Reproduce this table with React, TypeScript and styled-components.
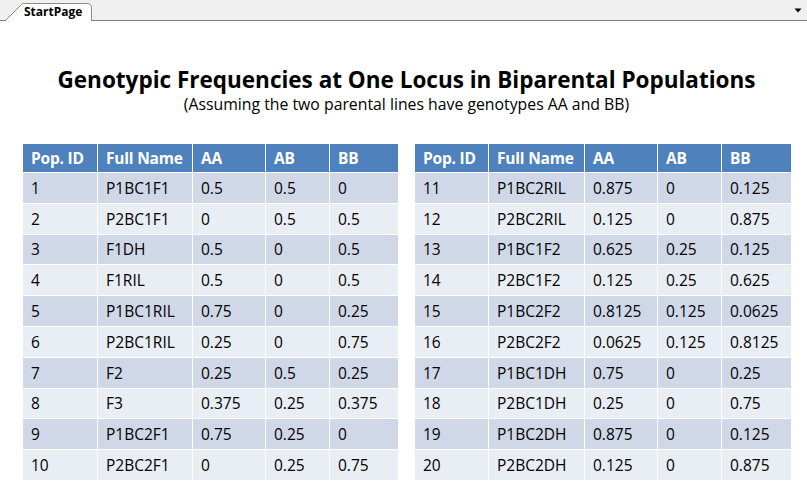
import styled, { createGlobalStyle } from 'styled-components';

type PopRow = [number, string, string, string, string];

const leftRows: PopRow[] = [
  [1, 'P1BC1F1', '0.5', '0.5', '0'],
  [2, 'P2BC1F1', '0', '0.5', '0.5'],
  [3, 'F1DH', '0.5', '0', '0.5'],
  [4, 'F1RIL', '0.5', '0', '0.5'],
  [5, 'P1BC1RIL', '0.75', '0', '0.25'],
  [6, 'P2BC1RIL', '0.25', '0', '0.75'],
  [7, 'F2', '0.25', '0.5', '0.25'],
  [8, 'F3', '0.375', '0.25', '0.375'],
  [9, 'P1BC2F1', '0.75', '0.25', '0'],
  [10, 'P2BC2F1', '0', '0.25', '0.75'],
];

const rightRows: PopRow[] = [
  [11, 'P1BC2RIL', '0.875', '0', '0.125'],
  [12, 'P2BC2RIL', '0.125', '0', '0.875'],
  [13, 'P1BC1F2', '0.625', '0.25', '0.125'],
  [14, 'P2BC1F2', '0.125', '0.25', '0.625'],
  [15, 'P1BC2F2', '0.8125', '0.125', '0.0625'],
  [16, 'P2BC2F2', '0.0625', '0.125', '0.8125'],
  [17, 'P1BC1DH', '0.75', '0', '0.25'],
  [18, 'P2BC1DH', '0.25', '0', '0.75'],
  [19, 'P1BC2DH', '0.875', '0', '0.125'],
  [20, 'P2BC2DH', '0.125', '0', '0.875'],
];

const headers = ['Pop. ID', 'Full Name', 'AA', 'AB', 'BB'];

const GlobalStyle = createGlobalStyle`
  html, body {
    margin: 0;
    padding: 0;
    background: #ffffff;
  }
  body {
    font-family: "Open Sans", "Noto Sans", sans-serif;
    color: #000000;
  }
`;

const Page = styled.div`
  width: 807px;
  height: 500px;
  overflow: hidden;
`;

const TabBar = styled.div`
  display: flex;
  align-items: flex-end;
  justify-content: space-between;
  height: 20px;
  padding: 0 5px 0 5px;
  background: #f0f0f0;
  border-bottom: 1px solid #7c7c7c;
`;

const Tab = styled.div`
  position: relative;
  width: 87px;
  height: 19px;
  margin-bottom: -1px;
  padding: 1px 0 0 19px;
  box-sizing: border-box;
  font-size: 12px;
  font-weight: 700;
  line-height: 17px;
`;

const TabShape = styled.svg`
  position: absolute;
  left: 0;
  top: 0;
  z-index: 0;
`;

const TabLabel = styled.span`
  position: relative;
  z-index: 1;
`;

const DropArrow = styled.svg`
  align-self: center;
  margin-top: 1px;
`;

const Heading = styled.header`
  display: flex;
  flex-direction: column;
  align-items: center;
  padding-top: 44px;
  padding-left: 6px;
`;

const Title = styled.h1`
  margin: 0;
  font-size: 22.5px;
  font-weight: 700;
  line-height: 30px;
`;

const Subtitle = styled.p`
  margin: 0;
  font-size: 15.8px;
  line-height: 19px;
`;

const Tables = styled.div`
  display: flex;
  gap: 15px;
  padding: 30px 0 0 22px;
`;

const Table = styled.table`
  border-collapse: collapse;
  table-layout: fixed;
  font-size: 15.5px;
`;

const HeadCell = styled.th`
  height: 28px;
  padding: 0 0 0 8px;
  background: #4f81bd;
  color: #ffffff;
  font-weight: 700;
  text-align: left;
  border: 1px solid #ffffff;
  border-top: none;
  white-space: nowrap;
  letter-spacing: -0.2px;
`;

const Cell = styled.td<{ $odd: boolean }>`
  height: 29.8px;
  padding: 0 0 0 8px;
  background: ${({ $odd }) => ($odd ? '#d0d8e8' : '#e9edf4')};
  border: 1px solid #ffffff;
  white-space: nowrap;
`;

interface PopTableProps {
  rows: PopRow[];
  widths: number[];
}

const PopTable = ({ rows, widths }: PopTableProps) => (
  <Table style={{ width: widths.reduce((a, b) => a + b, 0) }}>
    <colgroup>
      {widths.map((w, i) => (
        <col key={i} style={{ width: w }} />
      ))}
    </colgroup>
    <thead>
      <tr>
        {headers.map((h) => (
          <HeadCell key={h}>{h}</HeadCell>
        ))}
      </tr>
    </thead>
    <tbody>
      {rows.map((row, i) => (
        <tr key={row[0]}>
          {row.map((value, j) => (
            <Cell key={j} $odd={i % 2 === 0}>
              {value}
            </Cell>
          ))}
        </tr>
      ))}
    </tbody>
  </Table>
);

export default function App() {
  return (
    <Page>
      <GlobalStyle />
      <TabBar>
        <Tab>
          <TabShape width="87" height="19" viewBox="0 0 87 19">
            <path
              d="M0 19 L17.5 1.5 L82 1.5 Q86.5 1.5 86.5 6 L86.5 19"
              fill="#ffffff"
              stroke="#8a8a8a"
              strokeWidth="1"
            />
          </TabShape>
          <TabLabel>StartPage</TabLabel>
        </Tab>
        <DropArrow width="8" height="5" viewBox="0 0 8 5">
          <path d="M0.5 0.5 L7.5 0.5 L4 4.5 Z" fill="#000000" />
        </DropArrow>
      </TabBar>
      <Heading>
        <Title>Genotypic Frequencies at One Locus in Biparental Populations</Title>
        <Subtitle>(Assuming the two parental lines have genotypes AA and BB)</Subtitle>
      </Heading>
      <Tables>
        <PopTable rows={leftRows} widths={[75, 95, 73, 64, 69]} />
        <PopTable rows={rightRows} widths={[74, 96, 73, 64, 70]} />
      </Tables>
    </Page>
  );
}
